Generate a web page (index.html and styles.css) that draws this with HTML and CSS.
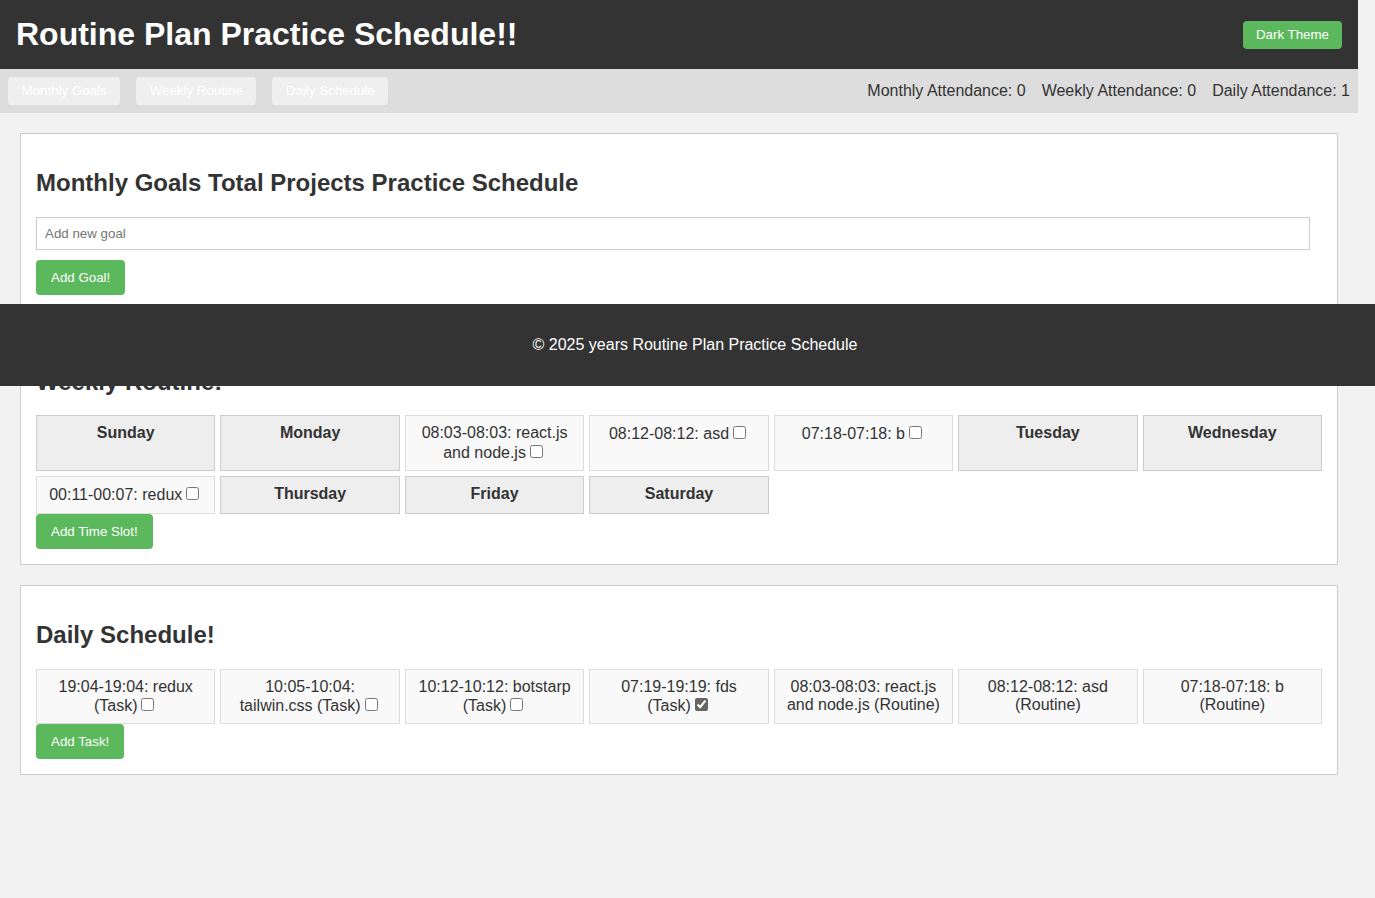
FILE: index.html
```html
<!DOCTYPE html>
<html lang="en">
<head>
<meta charset="utf-8">
<title>Routine Plan Practice Schedule</title>
<link rel="stylesheet" href="styles.css">
</head>
<body>
<div class="app">
  <header class="topbar">
    <h1 class="title">Routine Plan Practice Schedule!!</h1>
    <button class="btn btn-theme">Dark Theme</button>
  </header>
  <nav class="navbar">
    <div class="tabs">
      <button class="tab">Monthly Goals</button>
      <button class="tab">Weekly Routine</button>
      <button class="tab">Daily Schedule</button>
    </div>
    <div class="stats">
      <span>Monthly Attendance: 0</span>
      <span>Weekly Attendance: 0</span>
      <span>Daily Attendance: 1</span>
    </div>
  </nav>
  <main class="content">
    <section class="card">
      <h2>Monthly Goals Total Projects Practice Schedule</h2>
      <input class="goal-input" type="text" placeholder="Add new goal">
      <button class="btn btn-add">Add Goal!</button>
    </section>
    <section class="card card-weekly">
      <h2>Weekly Routine!</h2>
      <div class="grid">
        <div class="cell day">Sunday</div>
        <div class="cell day">Monday</div>
        <div class="cell slot">08:03-08:03: react.js and node.js<input type="checkbox"></div>
        <div class="cell slot">08:12-08:12: asd<input type="checkbox"></div>
        <div class="cell slot">07:18-07:18: b<input type="checkbox"></div>
        <div class="cell day">Tuesday</div>
        <div class="cell day">Wednesday</div>
        <div class="cell slot">00:11-00:07: redux<input type="checkbox"></div>
        <div class="cell day">Thursday</div>
        <div class="cell day">Friday</div>
        <div class="cell day">Saturday</div>
      </div>
      <button class="btn btn-add">Add Time Slot!</button>
    </section>
    <section class="card">
      <h2>Daily Schedule!</h2>
      <div class="grid">
        <div class="cell slot">19:04-19:04: redux (Task)<input type="checkbox"></div>
        <div class="cell slot">10:05-10:04: tailwin.css (Task)<input type="checkbox"></div>
        <div class="cell slot">10:12-10:12: botstarp (Task)<input type="checkbox"></div>
        <div class="cell slot">07:19-19:19: fds (Task)<input type="checkbox" checked></div>
        <div class="cell slot">08:03-08:03: react.js and node.js (Routine)</div>
        <div class="cell slot">08:12-08:12: asd (Routine)</div>
        <div class="cell slot">07:18-07:18: b (Routine)</div>
      </div>
      <button class="btn btn-add">Add Task!</button>
    </section>
  </main>
</div>
<footer class="footer">© 2025 years Routine Plan Practice Schedule</footer>
</body>
</html>
```

FILE: styles.css
```css
html, body {
  margin: 0;
  background: #f2f2f2;
  font-family: "Liberation Sans", Arial, sans-serif;
  color: #333;
}

.app {
  margin-right: 17px;
}

.topbar {
  display: flex;
  align-items: center;
  justify-content: space-between;
  background: #333;
  padding: 16px 16px 16px 16px;
}

.title {
  margin: 0;
  color: #fff;
  font-size: 32px;
  line-height: 37px;
  font-weight: bold;
}

.btn {
  font-family: "Liberation Sans", Arial, sans-serif;
  font-size: 13.3333px;
  line-height: 15px;
  border: none;
  border-radius: 4px;
  color: #fff;
  background: #5cb85c;
  cursor: pointer;
}

.btn-theme {
  padding: 6px 13px;
  height: 28px;
}

.navbar {
  display: flex;
  align-items: center;
  justify-content: space-between;
  background: #ddd;
  padding: 8px;
}

.tabs {
  display: flex;
  gap: 16px;
}

.tab {
  font-family: "Liberation Sans", Arial, sans-serif;
  font-size: 13.3333px;
  line-height: 16px;
  height: 28px;
  padding: 6px 13.5px;
  border: none;
  border-radius: 4px;
  background: #efefef;
  color: #fff;
}

.stats {
  display: flex;
  gap: 16px;
  font-size: 16px;
  color: #333;
}

.content {
  padding: 20px 20px 0 20px;
}

.card {
  background: #fff;
  border: 1px solid #ccc;
  padding: 15px;
  margin-bottom: 20px;
}

.card h2 {
  font-size: 24px;
  margin: 20px 0;
  line-height: 27.6px;
}

.card-weekly h2 {
  margin-top: 21px;
}

.goal-input {
  display: block;
  width: calc(100% - 12px);
  box-sizing: border-box;
  height: 33px;
  padding: 8px;
  border: 1px solid #ccc;
  font-family: "Liberation Sans", Arial, sans-serif;
  font-size: 13.3333px;
  margin: 0 0 10px 0;
}

.goal-input::placeholder {
  color: #757575;
}

.btn-add {
  display: block;
  padding: 10px 15px;
  height: 35px;
}

.grid {
  display: grid;
  grid-template-columns: repeat(7, 1fr);
  gap: 5px;
}

.cell {
  box-sizing: border-box;
  min-height: 38px;
  padding: 8px;
  text-align: center;
  font-size: 16px;
  line-height: 18.4px;
}

.day {
  background: #eee;
  border: 1px solid #ccc;
  font-weight: bold;
}

.slot {
  background: #f9f9f9;
  border: 1px solid #ddd;
}

.slot input[type="checkbox"] {
  accent-color: #666;
  margin: 2px 3px 3px 4px;
}

.footer {
  position: fixed;
  top: 304px;
  left: 0;
  width: calc(100% - 17px);
  padding: 32px 16px 32px 16px;
  line-height: 18px;
  background: #333;
  color: #fff;
  text-align: center;
  font-size: 16px;
}
```
